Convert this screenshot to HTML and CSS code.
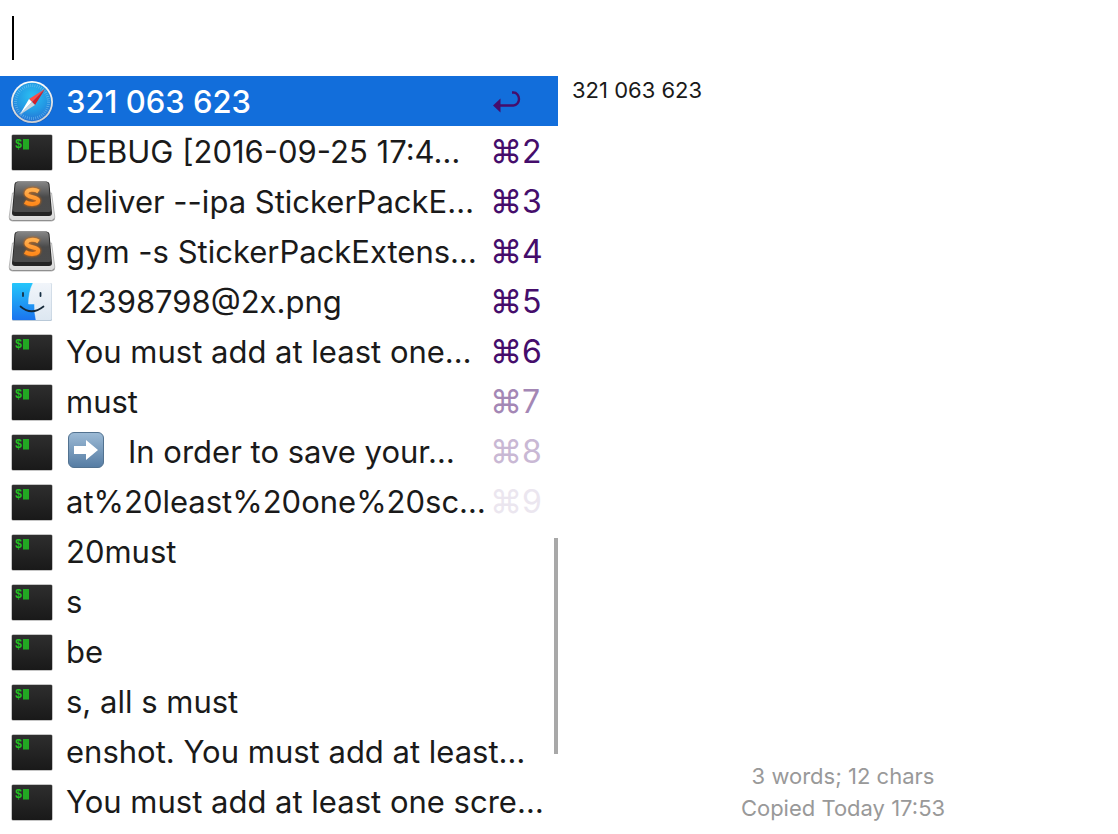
FILE: index.html
```
<!DOCTYPE html>
<html lang="en">
<head>
<meta charset="utf-8">
<meta name="viewport" content="width=device-width, initial-scale=1">
<title>Clipboard History</title>
<link rel="stylesheet" href="styles.css">
</head>
<body>
<svg class="defs" aria-hidden="true">
  <defs>
    <linearGradient id="term" x1="0" y1="0" x2="0" y2="1"><stop offset="0" stop-color="#2e2e2e"/><stop offset="1" stop-color="#191919"/></linearGradient>
    <linearGradient id="key" x1="0" y1="0" x2="0" y2="1"><stop offset="0" stop-color="#858585"/><stop offset=".35" stop-color="#5d5d5d"/><stop offset=".5" stop-color="#4a4a4a"/><stop offset="1" stop-color="#4b4b4b"/></linearGradient>
    <linearGradient id="base" x1="0" y1="0" x2="0" y2="1"><stop offset="0" stop-color="#f8f8f8"/><stop offset="1" stop-color="#d8d8d8"/></linearGradient>
    <linearGradient id="amber" x1="0" y1="0" x2="0" y2="1"><stop offset="0" stop-color="#ffb050"/><stop offset="1" stop-color="#ff8a1c"/></linearGradient>
    <radialGradient id="sea" cx=".5" cy=".35" r=".65"><stop offset="0" stop-color="#2bc0f2"/><stop offset=".6" stop-color="#2399e4"/><stop offset="1" stop-color="#2573d4"/></radialGradient>
    <linearGradient id="rim" x1="0" y1="0" x2="0" y2="1"><stop offset="0" stop-color="#ffffff"/><stop offset="1" stop-color="#c9ccd0"/></linearGradient>
    <linearGradient id="face" x1="0" y1="0" x2="0" y2="1"><stop offset="0" stop-color="#25c6fb"/><stop offset="1" stop-color="#1b74ee"/></linearGradient>
    <linearGradient id="pale" x1="0" y1="0" x2="0" y2="1"><stop offset="0" stop-color="#f1f5fa"/><stop offset="1" stop-color="#dde7f1"/></linearGradient>
    <linearGradient id="steel" x1="0" y1="0" x2="0" y2="1"><stop offset="0" stop-color="#9dbbd6"/><stop offset="1" stop-color="#557ca3"/></linearGradient>
    <filter id="glow" x="-50%" y="-50%" width="200%" height="200%"><feGaussianBlur stdDeviation="1.2"/></filter>
  </defs>
  <symbol id="terminal" class="glyph" viewBox="0 0 64 50">
    <rect x="11.5" y="8.500" width="41" height="36" rx="1.500" fill="#8b8b8b"/>
    <rect x="12" y="9" width="40" height="35" rx="1" fill="url(#term)"/>
    <text class="prompt" x="15" y="22">$</text>
    <rect x="23" y="13" width="6" height="10.500" fill="#22a722"/>
  </symbol>
  <symbol id="sublime" viewBox="0 0 64 50">
    <path d="M12.500 17h39l3.300 24q.4 4-3 4H12.200q-3.400 0-3-4z" fill="url(#base)" stroke="#a9a9a9" stroke-width=".8"/>
    <path d="M10 42.500q.5 2 2.500 2h39q2 0 2.500-2" fill="none" stroke="#8f8f8f" stroke-width="1"/>
    <path d="M14.500 8q.4-2.500 3-2.500h29q2.600 0 3 2.500L52 37q0 3-3 3H15q-3 0-3-3z" fill="#242424"/>
    <path d="M15.500 8q.3-2 2.500-2h28q2.200 0 2.500 2l2.500 26q0 2-2 2H15q-2 0-2-2z" fill="url(#key)"/>
    <path d="M38.500 15.500C35 13 26.500 13 26.500 17.500S38.200 20.500 38.200 24.500 30 29 25 26" fill="none" stroke="#d66b10" stroke-width="5" filter="url(#glow)"/>
    <path d="M38.500 15.500C35 13 26.500 13 26.500 17.500S38.200 20.500 38.200 24.500 30 29 25 26" fill="none" stroke="url(#amber)" stroke-width="4"/>
  </symbol>
  <symbol id="safari" viewBox="0 0 64 50">
    <circle cx="32" cy="26.500" r="21.200" fill="#174b91" opacity=".5"/>
    <circle cx="32" cy="26" r="21" fill="url(#rim)"/>
    <circle cx="32" cy="26" r="19.200" fill="url(#sea)"/>
    <circle cx="32" cy="26" r="16.500" fill="none" stroke="#8bd0f5" stroke-width="3" stroke-dasharray=".7 1.460" opacity=".6"/>
    <path d="M20 38.500 44.500 14 34.500 28.500z" fill="#164d8d" opacity=".35"/>
    <path d="M45 13 29 23l3 3z" fill="#ff4b46"/>
    <path d="M45 13 35 29l-3-3z" fill="#d2202a"/>
    <path d="M19.500 39 29 23l3 3z" fill="#fff"/>
    <path d="M19.500 39 35 29l-3-3z" fill="#c9d3dc"/>
  </symbol>
  <symbol id="finder" viewBox="0 0 64 50">
    <rect x="12" y="7" width="40" height="38" rx="1.500" fill="#b9c9d8"/>
    <rect x="12" y="7" width="39.500" height="37" rx="1.500" fill="url(#pale)"/>
    <path d="M13 7h20Q28.500 16 28.500 28h6q-.2 9 1.500 16H13q-1 0-1-1V8q0-1 1-1z" fill="url(#face)"/>
    <path d="M33 7Q28.500 16 28.500 28h6q-.2 9 1.500 16" fill="none" stroke="#eef6fd" stroke-width=".8" opacity=".6"/>
    <path d="M23 17v3M40.500 17v3" stroke="#173044" stroke-width="1.800" stroke-linecap="round"/>
    <path d="M20.500 30.500q11 9.500 23 0" fill="none" stroke="#152838" stroke-width="1.700" stroke-linecap="round"/>
  </symbol>
</svg>

<div class="app">
  <header class="search">
    <input class="query" type="text" aria-label="Search clipboard">
  </header>
  <main class="panes">
    <section class="history" aria-label="History">
      <button class="row selected" type="button"><svg class="icon"><use href="#safari"/></svg><span class="title">321 063 623</span><span class="key"><svg class="return" viewBox="0 0 28 22" role="img" aria-label="Return"><path d="M19 1.500h1.500a5.500 6.500 0 0 1 0 13H7" fill="none" stroke="#450d6b" stroke-width="2.400"/><path d="M0 14.500 7.500 7.500v14z" fill="#450d6b"/></svg></span></button>
      <button class="row" type="button"><svg class="icon"><use href="#terminal"/></svg><span class="title">DEBUG [2016-09-25 17:4…</span><span class="key">⌘2</span></button>
      <button class="row" type="button"><svg class="icon"><use href="#sublime"/></svg><span class="title">deliver --ipa StickerPackE…</span><span class="key">⌘3</span></button>
      <button class="row" type="button"><svg class="icon"><use href="#sublime"/></svg><span class="title">gym -s StickerPackExtens…</span><span class="key">⌘4</span></button>
      <button class="row" type="button"><svg class="icon"><use href="#finder"/></svg><span class="title">12398798@2x.png</span><span class="key">⌘5</span></button>
      <button class="row" type="button"><svg class="icon"><use href="#terminal"/></svg><span class="title">You must add at least one…</span><span class="key">⌘6</span></button>
      <button class="row" type="button"><svg class="icon"><use href="#terminal"/></svg><span class="title">must</span><span class="key fade-1">⌘7</span></button>
      <button class="row" type="button"><svg class="icon"><use href="#terminal"/></svg><span class="title with-arrow"><svg class="arrow" viewBox="0 0 36 36" role="img" aria-label="Right arrow"><rect x=".5" y=".5" width="35" height="35" rx="5.500" fill="url(#steel)" stroke="#527290"/><path d="M6 14h12V8l12 10-12 10v-6H6z" fill="#fff"/></svg><span>In order to save your…</span></span><span class="key fade-2">⌘8</span></button>
      <button class="row" type="button"><svg class="icon"><use href="#terminal"/></svg><span class="title">at%20least%20one%20sc…</span><span class="key fade-3">⌘9</span></button>
      <button class="row" type="button"><svg class="icon"><use href="#terminal"/></svg><span class="title">20must</span></button>
      <button class="row" type="button"><svg class="icon"><use href="#terminal"/></svg><span class="title">s</span></button>
      <button class="row" type="button"><svg class="icon"><use href="#terminal"/></svg><span class="title">be</span></button>
      <button class="row" type="button"><svg class="icon"><use href="#terminal"/></svg><span class="title">s, all s must</span></button>
      <button class="row" type="button"><svg class="icon"><use href="#terminal"/></svg><span class="title">enshot. You must add at least…</span></button>
      <button class="row" type="button"><svg class="icon"><use href="#terminal"/></svg><span class="title">You must add at least one scre…</span></button>
      <div class="thumb"></div>
    </section>
    <section class="preview" aria-label="Preview">
      <p class="content">321 063 623</p>
      <footer class="meta"><p>3 words; 12 chars</p><p>Copied Today 17:53</p></footer>
    </section>
  </main>
</div>
</body>
</html>
```
FILE: styles.css
```
* { box-sizing: border-box; }
body {
  margin: 0;
  background: #fff;
  color: #1a1a1a;
  font-family: Inter, "Liberation Sans", sans-serif;
}
p { margin: 0; }
.defs { position: absolute; width: 0; height: 0; overflow: visible; }
.glyph { overflow: visible; }
.app { display: flex; flex-direction: column; min-height: 100vh; }
.search { padding: 16px 12px; }
.query {
  display: block;
  width: 100%;
  height: 44px;
  padding: 0 4px;
  border: 0;
  border-left: 2px solid #000;
  outline: 0;
  background: transparent;
  font: inherit;
  font-size: 36px;
}
.panes { display: grid; grid-template-columns: 558fr 560fr; flex: 1; }
.history { position: relative; min-width: 0; padding-bottom: 8px; }
.row {
  display: flex;
  align-items: center;
  width: 100%;
  height: 50px;
  padding: 0 12px 0 0;
  border: 0;
  background: none;
  color: inherit;
  font: inherit;
  font-size: 31px;
  line-height: 50px;
  text-align: left;
  white-space: nowrap;
}
.selected { background: #126edb; color: #fff; font-weight: 500; }
.icon { flex: none; width: 64px; height: 50px; }
.title { flex: 1; min-width: 0; padding-left: 2px; padding-top: 2px; }
.with-arrow { display: flex; align-items: center; gap: 24px; padding-left: 4px; }
.arrow { flex: none; width: 36px; height: 36px; margin-bottom: 4px; }
.key { flex: none; width: 56px; padding-top: 2px; color: #450d6b; font-size: 32px; }
.return { display: block; width: 28px; height: 22px; margin-left: 3px; }
.fade-1 { color: #a487b5; }
.fade-2 { color: #c9b8d4; }
.fade-3 { color: #ebe6ef; }
.prompt { fill: #22c322; font: bold 12px "Liberation Mono", monospace; }
.thumb {
  position: absolute;
  right: 0;
  top: 61%;
  width: 4px;
  height: 216px;
  background: #a8a8a8;
}
.preview {
  display: flex;
  flex-direction: column;
  justify-content: space-between;
  padding: 0 4px 10px 14px;
  font-size: 22px;
  line-height: 32px;
}
.content { line-height: 28px; }
.meta { color: #999; text-align: center; }
```
